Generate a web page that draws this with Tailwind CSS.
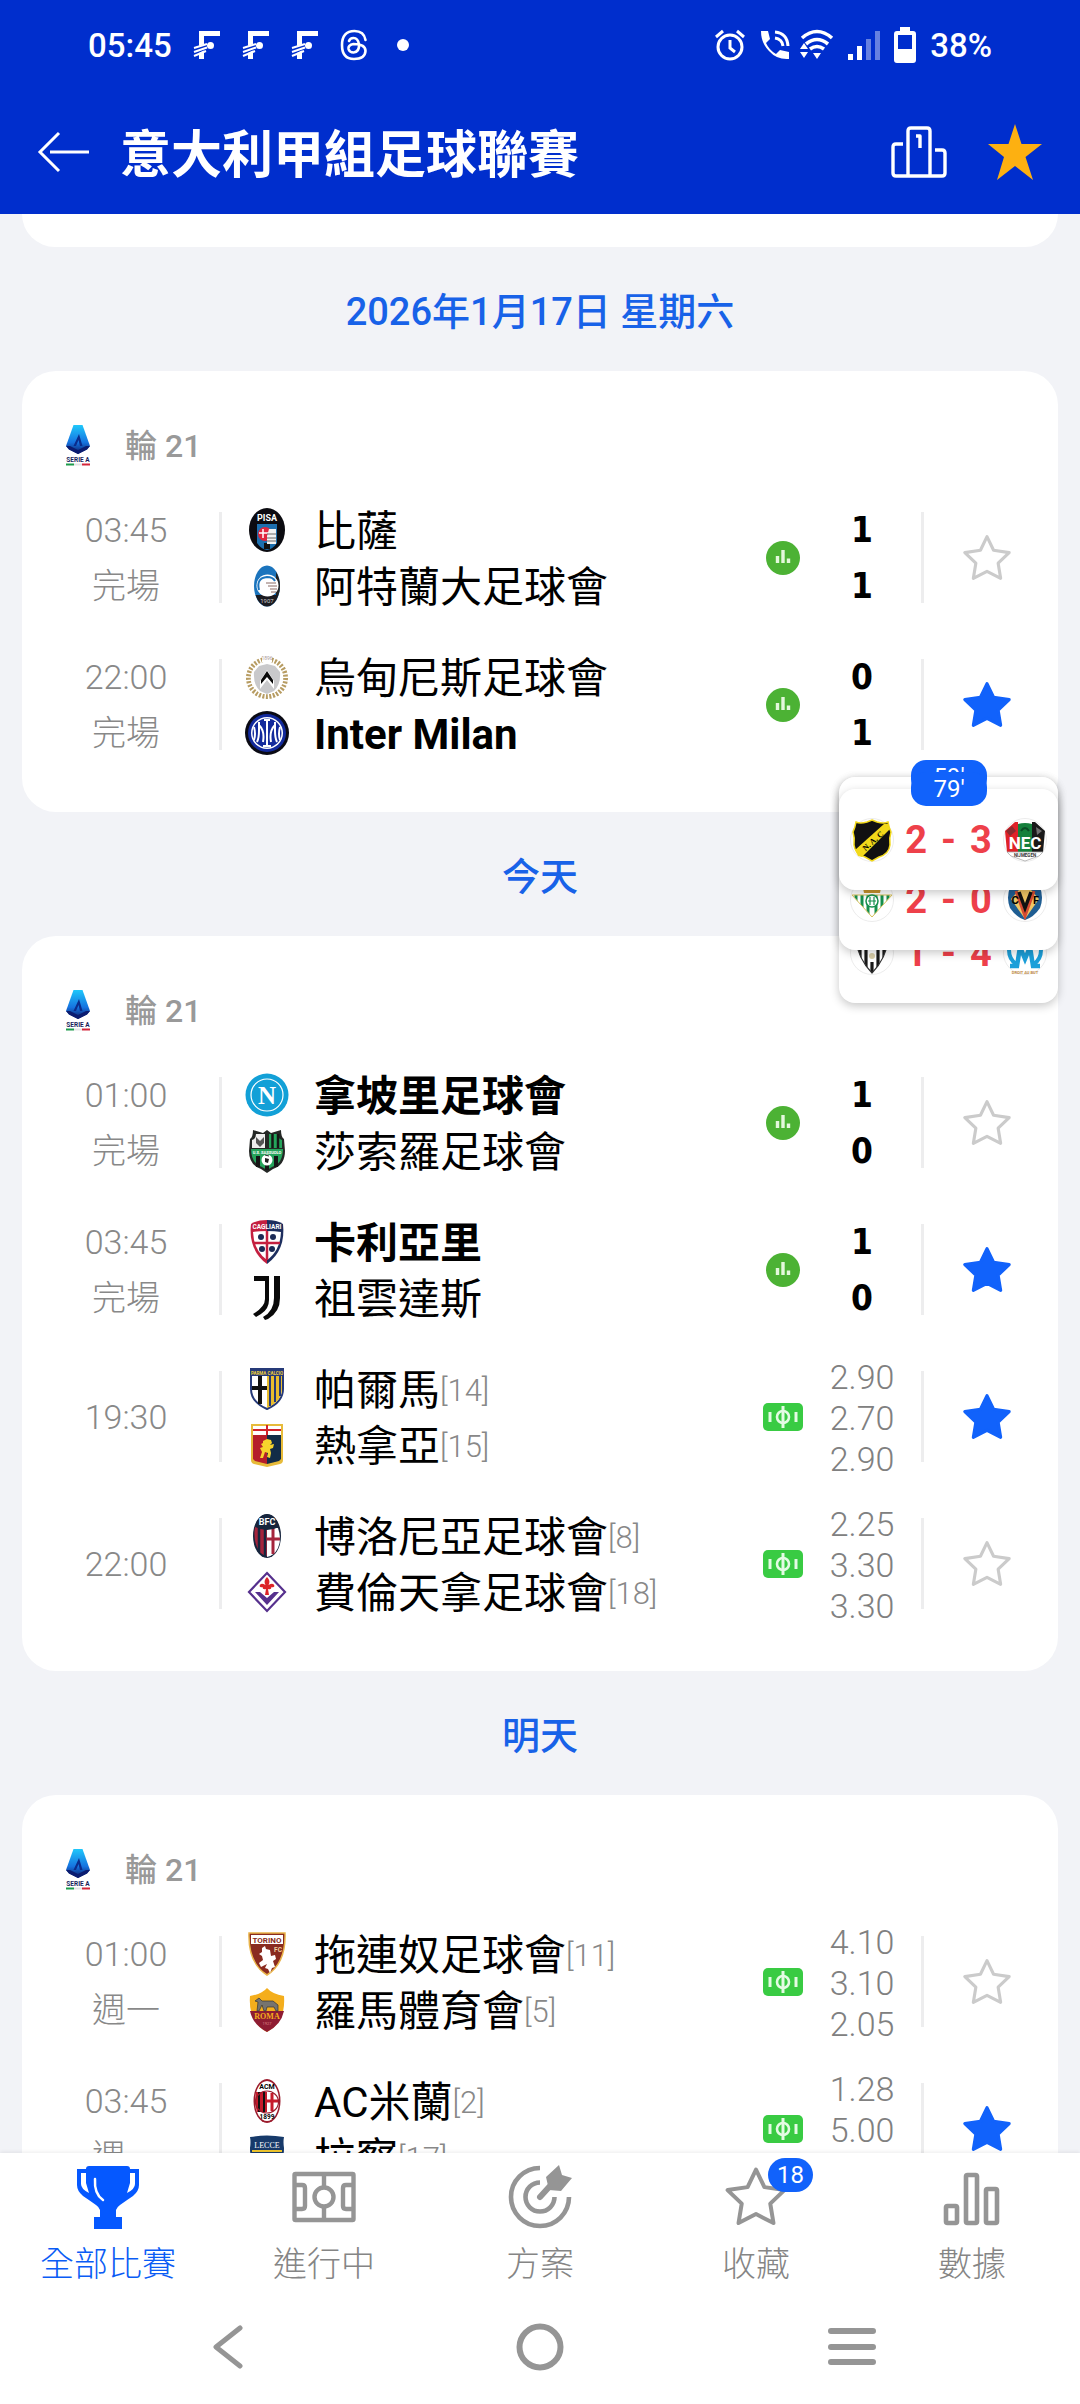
<!DOCTYPE html>
<html lang="zh-Hant">
<head>
    <meta charset="UTF-8">
    <meta name="viewport" content="width=device-width, initial-scale=1.0">
    <title>意大利甲組足球聯賽</title>
    <script src="https://cdn.jsdelivr.net/npm/@tailwindcss/browser@4"></script>
    <style>
        body {
            font-family: Roboto, 'Noto Sans CJK TC', sans-serif;
        }
    </style>
</head>
<body class="h-screen flex flex-col overflow-hidden bg-[#f2f3f7] text-black">

    <!-- Paint servers and clips: these stop working inside a display:none svg -->
    <svg class="absolute w-0 h-0" aria-hidden="true">
        <linearGradient id="gem" x1="0" y1="0" x2="0" y2="1">
            <stop offset="0" stop-color="#1fc8fb"/><stop offset=".6" stop-color="#1673e0"/><stop offset="1" stop-color="#0a1a66"/>
        </linearGradient>
        <clipPath id="betis-shield"><path d="M2 17h40L22 39z"/></clipPath>
        <clipPath id="angers-shield"><path d="M5 6h34Q36 28 22 42 8 28 5 6z"/></clipPath>
    </svg>

    <!-- Shared icons and club crests -->
    <svg class="hidden" aria-hidden="true">
        <symbol id="serie-a" viewBox="0 0 26 42">
            <path d="M8.500 0h9L25 21l-3 3.500L13 29l-9-4.500L1 21z" fill="url(#gem)"/>
            <path d="M1 21l4 0 8 4 8-4h4l-3 3.500L13 29l-9-4.500z" fill="#0b1c70"/>
            <path d="M8.500 21L14 9l3.500 12h-2.500l-1.500-6-2.500 6z" fill="#0a2c8c"/>
            <text x="13" y="36.500" text-anchor="middle" font-size="6.500" font-weight="700" fill="#1a1f5c">SERIE A</text>
            <path d="M1 39.500h8" stroke="#1d9b4b" stroke-width="2"/><path d="M9 39.500h8" stroke="#e4e4e4" stroke-width="2"/><path d="M17 39.500h8" stroke="#d3263a" stroke-width="2"/>
        </symbol>
        <symbol id="f-mark" viewBox="0 0 28 30">
            <path d="M6 1h21v5H11v23H6z" fill="#fff"/><path d="M0 18l18-6v5L0 26z" fill="#002ecd"/>
            <path d="M1 18l13-4M1 22l13-4.500M1 26l12-5" stroke="#fff" stroke-width="2"/><circle cx="17.500" cy="15.500" r="3.500" fill="#fff"/>
        </symbol>
        <symbol id="star" viewBox="0 0 48 48">
            <path d="M24 3.500l6.300 13.100 15 2.200-10.600 10.200 2.400 14.500L24 36.800l-13.100 6.700 2.400-14.500L2.700 18.800l15-2.200z" stroke-linejoin="round"/>
        </symbol>
        <symbol id="stats" viewBox="0 0 34 34">
            <circle cx="17" cy="17" r="17" fill="#4cb234"/>
            <path d="M11.500 15v7M17 9v13M22.500 17.500v4.500" stroke="#e4f8dc" stroke-width="3.400"/>
        </symbol>
        <symbol id="field" viewBox="0 0 40 28">
            <rect width="40" height="28" rx="5" fill="#39cb43"/>
            <path d="M7 9v10M33 9v10M20 3v22" stroke="#e4fbe4" stroke-width="3"/>
            <circle cx="20" cy="14" r="6" fill="none" stroke="#e4fbe4" stroke-width="2.600"/>
        </symbol>

        <symbol id="pisa" viewBox="0 0 44 44">
            <ellipse cx="22" cy="22" rx="18" ry="22" fill="#0b0b10"/>
            <path d="M12 16h20v19q-4 6-10 7-6-1-10-7z" fill="#1d6fae"/><path d="M19 35h6v6h-6z" fill="#111"/>
            <circle cx="20" cy="26" r="7" fill="#e0263d"/><path d="M18 21v9M14 25h9" stroke="#fff" stroke-width="1.500"/>
            <path d="M24 21h7v15h-9v-8z" fill="#f2f2f2"/><path d="M22 26h9M22 30h9M22 33h9" stroke="#444" stroke-width=".8"/>
            <text x="22" y="13" text-anchor="middle" font-size="9" font-weight="700" fill="#fff">PISA</text>
        </symbol>
        <symbol id="atalanta" viewBox="0 0 44 44">
            <ellipse cx="22" cy="22" rx="13" ry="20.500" fill="#1b74bd"/>
            <path d="M10.500 31h23Q30 42 22 42.500 14 42 10.500 31z" fill="#1a1a20"/><path d="M31 8q4 6 4 14 0 5-1.500 9H31z" fill="#222"/>
            <circle cx="22.500" cy="21.500" r="11" fill="#fff"/><path d="M14 26q-3-12 8-13 6 0 8 4" fill="none" stroke="#1b74bd" stroke-width="2"/>
            <path d="M21 19h10M23 22h9M25 25h7M26 28h5" stroke="#8a6a64" stroke-width="1"/>
            <text x="22" y="39" text-anchor="middle" font-size="6" fill="#ccc">1907</text>
        </symbol>
        <symbol id="udinese" viewBox="0 0 44 44">
            <circle cx="22" cy="23" r="18.500" fill="none" stroke="#b79c62" stroke-width="5" stroke-dasharray="2 1.500"/>
            <circle cx="22" cy="23" r="15.500" fill="none" stroke="#fff" stroke-width="1.500"/>
            <path d="M17 0h10v7H17z" fill="#fff"/><text x="22" y="5" text-anchor="middle" font-size="5" fill="#a99">1896</text>
            <path d="M22 9l8 2 5 6q1 12-6 19l-7 3-7-3q-7-7-6-19l5-6z" fill="#c9c9cb"/>
            <path d="M15 26l7-11 7 11v8l-7-9-7 9z" fill="#fff"/><path d="M16 25l6-9 6 9v4l-6-7-6 7z" fill="#090909"/>
        </symbol>
        <symbol id="inter" viewBox="0 0 44 44">
            <circle cx="22" cy="22" r="22" fill="#0a0a14"/><circle cx="22" cy="22" r="19" fill="#132a9c"/>
            <circle cx="22" cy="22" r="16" fill="#fff"/><circle cx="22" cy="22" r="14.500" fill="#132a9c"/>
            <path d="M19 9h6M22 9v26M18 35h8M14 11v9q0 7-2 11M30 11v9q0 7 2 11M14 14q6 6 4 17M30 14q-6 6-4 17M9 16q2 7 0 13M35 16q-2 7 0 13" stroke="#fff" stroke-width="2" fill="none"/>
        </symbol>
        <symbol id="napoli" viewBox="0 0 44 44">
            <circle cx="22" cy="22" r="21.500" fill="#12a0d7"/><circle cx="22" cy="22" r="16" fill="none" stroke="#fff" stroke-width="1.200"/>
            <text x="22" y="30.500" text-anchor="middle" font-family="Liberation Serif" font-size="25" font-weight="700" fill="#fff">N</text>
        </symbol>
        <symbol id="sassuolo" viewBox="0 0 44 44">
            <path d="M22 1l4 3 10-3q0 7 3 9l1 12q0 14-12 18l-6 4-6-4Q4 36 4 22L5 10q3-2 3-9l10 3z" fill="#242725"/>
            <path d="M11 5h9v14H7V11q4-1 4-6z" fill="#eee"/><path d="M11 8l4 4 4-4v6l-4 4-4-4z" fill="#555"/>
            <path d="M24 5h9q0 5 4 6v8H24z" fill="#25a35b"/><path d="M27.500 5v14M33 5v14" stroke="#151515" stroke-width="2.500"/>
            <path d="M6 20h32q0 14-11 18l-5 3-5-3Q6 34 6 20z" fill="#25a35b"/>
            <path d="M13 27v11M31 27v11M22 36v5" stroke="#161616" stroke-width="4"/>
            <circle cx="22" cy="31" r="5.500" fill="#fff"/><path d="M20 29l4 1-1 4-3-1z" fill="#222"/><path d="M20 26l4 1" stroke="#222"/>
            <text x="22" y="25" text-anchor="middle" font-size="4" font-weight="700" fill="#fff">U.S. SASSUOLO</text>
        </symbol>
        <symbol id="cagliari" viewBox="0 0 44 44">
            <path d="M22 0Q32 0 38 4q3 26-16 40V0z" fill="#1d2e5e"/><path d="M22 0Q12 0 6 4 3 30 22 44z" fill="#c41f3f"/>
            <path d="M22 11q8 0 14 1-1 19-14 28Q9 31 8 12q6-1 14-1z" fill="#fff"/>
            <path d="M22 11v29M9 23h26" stroke="#c41f3f" stroke-width="2.500"/>
            <g fill="#1b2a55"><circle cx="16" cy="17" r="3"/><circle cx="28" cy="17" r="3"/><circle cx="17" cy="29" r="3"/><circle cx="27" cy="29" r="3"/></g>
            <text x="22" y="9" text-anchor="middle" font-size="6.500" font-weight="700" fill="#fff">CAGLIARI</text>
        </symbol>
        <symbol id="juventus" viewBox="0 0 44 44">
            <path d="M9 0h15v24q0 9-8 14l-5 3-3-3q12-7 12-15V5H9z" fill="#090909"/>
            <path d="M29 0h6v22q0 14-12 21l-3 1-2-3q11-6 11-19z" fill="#090909"/>
        </symbol>
        <symbol id="parma" viewBox="0 0 44 44">
            <path d="M6 2h32v20q0 13-16 20Q6 35 6 22z" fill="#fff" stroke="#263a78" stroke-width="2"/>
            <path d="M22 9h15v13q0 12-15 19z" fill="#e9bd2c"/><path d="M25 9v30M30 9v26M35 9v20" stroke="#263a78" stroke-width="2"/>
            <path d="M15 9v28M7 21h15" stroke="#111" stroke-width="4"/><path d="M6 2h32v7H6z" fill="#263a78"/>
            <text x="22" y="8" text-anchor="middle" font-size="4.500" font-weight="700" fill="#edce3a">PARMA CALCIO</text>
        </symbol>
        <symbol id="genoa" viewBox="0 0 44 44">
            <path d="M6 1h32v36q0 3-3 4l-13 3-13-3q-3-1-3-4z" fill="#e7bb3a"/>
            <path d="M8 12h14v29l-12-3-2-2z" fill="#b51e2a"/><path d="M22 12h14v24l-2 2-12 3z" fill="#122c47"/>
            <path d="M8 3h28v9H8z" fill="#fff"/><path d="M8 7h28M22 2v10" stroke="#d2232b" stroke-width="2"/>
            <path d="M18 18l4-2 4 1 1 3-2 2 4-1-1 4-3 1 1 4-1 5-3-1 1-4-3-1-2 6h-3l2-6-2-4 3-1-2-3 2-1z" fill="#f6d42d"/>
        </symbol>
        <symbol id="bologna" viewBox="0 0 44 44">
            <ellipse cx="22" cy="22" rx="14" ry="22" fill="#17253d"/>
            <path d="M10 13h12v29q-6-1-9-7-5-9-3-22z" fill="#a4243c"/>
            <path d="M14 14v24M20 15v27" stroke="#17253d" stroke-width="2.500"/><path d="M22 14h11q4 11 0 20-4 8-11 9z" fill="#fff"/><path d="M28 14v26M22 25h13" stroke="#a4243c" stroke-width="3"/>
            <path d="M10 13q12 6 24 0Q32 1 22 0 12 1 10 13z" fill="#17253d"/>
            <text x="22" y="11" text-anchor="middle" font-size="9" font-weight="700" fill="#fff">BFC</text>
        </symbol>
        <symbol id="fiorentina" viewBox="0 0 44 44">
            <path d="M22 3l18 19-18 19L4 22z" fill="#fff" stroke="#56308d" stroke-width="2.200"/>
            <path d="M10 22h5l7 6 7-6h5L22 35z" fill="#56308d"/>
            <path d="M22 7q4 4 1.500 8 5-3 6 1-1 2-3 1 0 3-3.500 2l1 6h-4l1-6q-3.500 1-3.500-2-2 1-3-1 1-4 6-1Q18 11 22 7z" fill="#dc2429"/>
        </symbol>
        <symbol id="torino" viewBox="0 0 44 44">
            <path d="M4 1h36q1 30-18 42Q3 31 4 1z" fill="#8a2b20" stroke="#e9b44a" stroke-width="1.500"/>
            <path d="M6 3h32v9H6z" fill="#fff"/><text x="22" y="10.500" text-anchor="middle" font-size="8" font-weight="700" fill="#8a2b20">TORINO</text>
            <path d="M17 16l3-2 1 3 4 1 1 6 4-1 1 4-3 2 2 6-3 1-2 5-2-4-3-1 2-4-6 3-2-4 4-3-1-4-3-2 3-2z" fill="#fff"/>
            <text x="33" y="20" text-anchor="middle" font-size="6.500" font-weight="700" fill="#f0d4a0">FC</text>
        </symbol>
        <symbol id="roma" viewBox="0 0 44 44">
            <path d="M22 0q5 6 17 8 2 26-17 36Q3 34 5 8q12-2 17-8z" fill="#f4ae1c"/><path d="M5 23h34q-3 14-17 21Q8 37 5 23z" fill="#8e1c32"/>
            <path d="M10 13l4-3 3 3h11l5 4v6h-2l-2-4h-7l-1 4h-2l-2-6-3 6h-2l1-9z" fill="#77746f" stroke="#333" stroke-width=".7"/>
            <text x="22" y="31" text-anchor="middle" font-family="Liberation Serif" font-size="8" font-weight="700" fill="#f4ae1c">ROMA</text>
            <text x="22" y="37" text-anchor="middle" font-size="4" fill="#d88">1927</text>
        </symbol>
        <symbol id="milan" viewBox="0 0 44 44">
            <ellipse cx="22" cy="22" rx="13.500" ry="22" fill="#9b1b2c"/><ellipse cx="22" cy="22" rx="12" ry="20" fill="#fff"/>
            <path d="M11 13h11v20H12q-3-9-1-20z" fill="#c61b2b"/><path d="M14 13v20M19 13v20" stroke="#111" stroke-width="2"/>
            <path d="M27 14v18M22 22h12" stroke="#c61b2b" stroke-width="3"/><ellipse cx="22" cy="23" rx="11.500" ry="11" fill="none" stroke="#9b1b2c" stroke-width="1.200"/>
            <text x="22" y="10" text-anchor="middle" font-size="7" font-weight="700">ACM</text><text x="22" y="40" text-anchor="middle" font-size="6.500" font-weight="700">1899</text>
        </symbol>
        <symbol id="lecce" viewBox="0 0 44 44">
            <path d="M5 2q17-3 34 0-1 5 0 11 0 20-17 30Q5 33 5 13q1-6 0-11z" fill="#173a6a"/>
            <path d="M7 15h30v2H7z" fill="#efc62d"/><path d="M10 20h24q-2 12-12 18-10-6-12-18z" fill="#d02c37"/>
            <text x="22" y="13" text-anchor="middle" font-family="Liberation Serif" font-size="8" fill="#fff">LECCE</text>
        </symbol>
        <symbol id="nac" viewBox="0 0 44 44">
            <circle cx="22" cy="22" r="21.500" fill="#fff" stroke="#ececec"/>
            <path d="M22 2l5 2q7 2 11 0 1 6 3 10-2 6-1 13-1 9-11 12l-7 4-7-4Q5 36 4 27q1-7-1-13 2-4 3-10 4 2 11 0z" fill="#111" stroke="#f2d91a" stroke-width="1.500"/>
            <path d="M8 38l-3-6L34 6l4 0 2 5L12 39z" fill="#f2d91a"/>
            <text x="22" y="26" text-anchor="middle" font-family="Liberation Serif" font-size="8" font-weight="700" transform="rotate(-42 22 22)">N. A. C</text>
        </symbol>
        <symbol id="nec" viewBox="0 0 44 44">
            <circle cx="22" cy="22" r="21.500" fill="#fff" stroke="#ececec"/>
            <path d="M2 13L12 4h3v30H4z" fill="#e02128"/><path d="M15 6q7-2 14 0v28H15z" fill="#15803c"/><path d="M29 4h3l10 9-2 21H29z" fill="#191919"/>
            <path d="M3 13l6-5 4 5-6 5z" fill="#8b2b2f"/><path d="M33 9l6 4-5 4z" fill="#707070"/>
            <path d="M18 13q4-6 8 0" stroke="#0b4d26" stroke-width="2" fill="none"/>
            <text x="22" y="31" text-anchor="middle" font-size="17" font-weight="700" fill="#fff">NEC</text>
            <path d="M4 34h36l-4 4-14 5-14-5z" fill="#fff" stroke="#aaa" stroke-width=".8"/>
            <text x="22" y="38.500" text-anchor="middle" font-size="4.500" fill="#333">NIJMEGEN</text>
        </symbol>
        <symbol id="betis" viewBox="0 0 44 44">
            <circle cx="22" cy="22" r="21.500" fill="#fff" stroke="#ececec"/>
            <path d="M14 15l-2-10 5 3 5-5 5 5 5-3-2 10z" fill="#c9952e"/>
            <g clip-path="url(#betis-shield)"><path d="M6 17v22M12 17v22M18 17v22M26 17v22M32 17v22M38 17v22" stroke="#16904d" stroke-width="3"/></g>
            <path d="M2 17h40L22 39z" fill="none" stroke="#d7c15b"/>
            <circle cx="22" cy="23" r="6" fill="#fff" stroke="#16904d" stroke-width="1.500"/><path d="M18 23h8M20 19v8M24 19v8" stroke="#16904d" stroke-width="1.200"/>
        </symbol>
        <symbol id="villarreal" viewBox="0 0 44 44">
            <circle cx="22" cy="22" r="21.500" fill="#fff" stroke="#ececec"/>
            <path d="M22 2l15 7q4 11 0 21-6 9-15 12Q13 39 7 30 3 20 7 9z" fill="#1f5d92"/><path d="M22 5l14 16-14 20L8 21z" fill="#efc663"/>
            <path d="M13 13l9 25 9-25" stroke="#d64b32" stroke-width="3" fill="none"/><path d="M16 14l6 16 6-16" stroke="#111" stroke-width="3.500" fill="none"/>
            <text x="12" y="26" text-anchor="middle" font-size="11" font-weight="700">C</text><text x="33" y="26" text-anchor="middle" font-size="11" font-weight="700">F</text>
        </symbol>
        <symbol id="angers" viewBox="0 0 44 44">
            <circle cx="22" cy="22" r="21.500" fill="#fff" stroke="#ececec"/>
            <g clip-path="url(#angers-shield)"><path d="M10 6v36M16 6v36M28 6v36M34 6v36M22 31v12" stroke="#181818" stroke-width="3.200"/></g>
            <path d="M5 6h34Q36 28 22 42 8 28 5 6z" fill="none" stroke="#333" stroke-width="1.200"/><circle cx="22" cy="25" r="3" fill="#d8cda8"/>
        </symbol>
        <symbol id="marseille" viewBox="0 0 44 44">
            <circle cx="22" cy="22" r="21.500" fill="#fff" stroke="#ececec"/>
            <path d="M13 33q-7-5-7-14Q7 6 22 5q15 1 16 14 0 9-7 14" fill="none" stroke="#1c9fd9" stroke-width="4"/>
            <path d="M7 35h7l3-19 5 12 5-12 3 19h7" fill="none" stroke="#1c9fd9" stroke-width="4.500"/>
            <text x="22" y="43" text-anchor="middle" font-size="4" fill="#c08a44">DROIT AU BUT</text>
        </symbol>
    </svg>

    <header class="bg-[#002ecd] text-white shrink-0">
        <!-- Status bar -->
        <div class="h-[90px] px-[88px] flex items-center justify-between text-[33px] leading-none font-medium">
            <div class="flex items-center gap-[21px]">
                <span>05:45</span>
                <svg class="w-7 h-[30px]"><use href="#f-mark"/></svg>
                <svg class="w-7 h-[30px]"><use href="#f-mark"/></svg>
                <svg class="w-7 h-[30px]"><use href="#f-mark"/></svg>
                <svg class="w-7 h-8" viewBox="0 0 28 32" fill="none" stroke="#fff" stroke-width="2.600" stroke-linecap="round">
                    <path d="M25.500 11Q24 2 14.500 2 2 2 2 16t12 14q11 0 11.500-8 0-7-12-7-5.500 1-5 5 1 3.500 5 3.500 6-.5 5.500-8Q18 9 13.500 9 10 9 9 12"/>
                </svg>
                <svg class="w-7 h-3" viewBox="0 0 28 12"><circle cx="14" cy="6" r="6" fill="#fff"/></svg>
            </div>
            <div class="flex items-center gap-[14px]">
                <svg class="w-8 h-8" viewBox="0 0 32 32" fill="none" stroke="#fff" stroke-width="3">
                    <circle cx="16" cy="18" r="12"/><path d="M16 11v8l5 4M2 8l7-6M30 8l-7-6"/>
                </svg>
                <svg class="w-[30px] h-[30px]" viewBox="0 0 30 30">
                    <path d="M1 1h7l2 8-4 4q3 7 10 11l4-4 9 2v7Q17 30 9 21 1 13 1 1z" fill="#fff"/>
                    <path d="M15 2q12 1 13 14M15 8q7 1 8 8" fill="none" stroke="#fff" stroke-width="3"/>
                </svg>
                <svg class="w-[34px] h-8 -ml-1" viewBox="0 0 34 32" fill="none" stroke="#fff" stroke-width="3.600">
                    <path d="M2 9q15-13 30 0M6 15q11-9 22 0M10 20q7-5 14 0"/>
                    <path d="M0 20l4-6 4 6zM0 23h8l-4 6zM13 24h8l-4 6z" fill="#fff" stroke="none"/>
                </svg>
                <svg class="w-8 h-[30px]" viewBox="0 0 32 30" fill="#fff">
                    <path d="M0 24h5v6H0zM9 16h5v14H9z"/><path d="M18 9h5v21h-5zM27 1h5v29h-5z" opacity=".4"/>
                </svg>
                <svg class="w-[22px] h-9" viewBox="0 0 22 36">
                    <path d="M6 0h10v4h3q3 0 3 3v26q0 3-3 3H3q-3 0-3-3V7q0-3 3-3h3z" fill="#fff"/><path d="M4 8h14v14H4z" fill="#002ecd"/>
                </svg>
                <span>38%</span>
            </div>
        </div>
        <!-- Title bar -->
        <div class="h-[124px] pl-9 pr-[37px] flex items-center">
            <button aria-label="返回">
                <svg class="block w-14 h-11" viewBox="0 0 56 44" fill="none" stroke="#fff" stroke-width="3"><path d="M23 3L4 22l19 19M14 22h39"/></svg>
            </button>
            <h1 class="ml-[28px] flex-1 pt-2 text-[51px] leading-[60px] font-bold">意大利甲組足球聯賽</h1>
            <button aria-label="積分榜">
                <svg class="block w-14 h-[52px]" viewBox="0 0 56 52" fill="none" stroke="#fff" stroke-width="3.400" stroke-linejoin="round">
                    <path d="M12 18H5q-3 0-3 3v26q0 3 3 3h46q3 0 3-3V27q0-3-3-3h-7M17 50V5q0-3 3-3h16q3 0 3 3v45M25 10h4v12"/>
                </svg>
            </button>
            <button class="ml-10" aria-label="收藏聯賽">
                <svg class="block w-14 h-14" viewBox="0 0 56 56"><path d="M28 0l6.500 20H55L38.500 33 46 56 28 42 10 56l7-23L1 20h20.500z" fill="#fdb011"/></svg>
            </button>
        </div>
    </header>

    <main id="fixtures" class="flex-1 min-h-0 overflow-hidden px-[22px]">
        <div class="h-[33px] bg-white rounded-b-[34px]"></div>
    </main>

    <!-- Live scores floating above the list -->
    <aside class="absolute right-[22px] top-[760px] w-[219px] h-[243px] text-[38px] leading-[44px] font-bold text-[#ee404a]">
        <div class="absolute inset-x-0 top-[17px] bottom-0 bg-white rounded-[16px] shadow-[0_3px_10px_rgba(0,0,0,0.22)] px-[11px] pb-7 flex items-end justify-between">
            <svg class="w-11 h-11"><use href="#angers"/></svg>
            <p class="flex gap-[14px]"><span>1</span><span>-</span><span>4</span></p>
            <svg class="w-11 h-11"><use href="#marseille"/></svg>
        </div>
        <div class="absolute inset-x-0 top-[17px] bottom-[53px] bg-white rounded-[16px] shadow-[0_3px_10px_rgba(0,0,0,0.22)] px-[11px] pb-7 flex items-end justify-between">
            <span class="absolute -top-[17px] left-[72px] w-[76px] h-[34px] rounded-[15px] bg-[#1162fb] text-white text-[24px] leading-[34px] font-normal text-center">59'</span>
            <svg class="w-11 h-11"><use href="#betis"/></svg>
            <p class="flex gap-[14px]"><span>2</span><span>-</span><span>0</span></p>
            <svg class="w-11 h-11"><use href="#villarreal"/></svg>
        </div>
        <div class="absolute inset-x-0 top-[29px] bottom-[113px] bg-white rounded-[16px] shadow-[0_3px_10px_rgba(0,0,0,0.22)] px-[11px] pb-7 flex items-end justify-between">
            <span class="absolute -top-[17px] left-[72px] w-[76px] h-[34px] rounded-[15px] bg-[#1162fb] text-white text-[24px] leading-[34px] font-normal text-center">79'</span>
            <svg class="w-11 h-11"><use href="#nac"/></svg>
            <p class="flex gap-[14px]"><span>2</span><span>-</span><span>3</span></p>
            <svg class="w-11 h-11"><use href="#nec"/></svg>
        </div>
    </aside>

    <footer class="relative shrink-0 bg-white h-[251px] shadow-[0_-1px_4px_rgba(0,0,0,0.08)]">
        <nav class="grid grid-cols-5 pt-3 text-[34px] leading-10 font-light text-[#858585]">
            <a href="#all" class="flex flex-col items-center gap-[15px] text-[#0a5cf5]">
                <svg class="w-16 h-16" viewBox="0 0 64 64">
                    <path d="M10 4q0-3 3-3h38q3 0 3 3h9v16q0 6-6 11-6 4-13 9-3 2-4 5v7h6v12H18V52h6v-7q-1-3-4-5-7-5-13-9-6-5-6-11V4z" fill="#0558ff"/>
                    <path d="M5 8h5v10l3 10q-8-4-8-9zM59 8h-5v10l-3 10q8-4 8-9z" fill="#fff"/>
                    <path d="M19 14q-1 15 8 21" fill="none" stroke="#fff" stroke-width="2.500" stroke-linecap="round"/>
                </svg>
                <span>全部比賽</span>
            </a>
            <a href="#live" class="flex flex-col items-center gap-[15px]">
                <svg class="w-16 h-16" viewBox="0 0 64 64" fill="none" stroke="#959595" stroke-width="4.400">
                    <rect x="2.500" y="9" width="59" height="46" rx="1"/><path d="M32 9v12M32 43v12"/><circle cx="32" cy="32" r="9.500"/>
                    <path d="M3 20h7q3 0 3 3v18q0 3-3 3H3M61 20h-7q-3 0-3 3v18q0 3 3 3h7"/>
                </svg>
                <span>進行中</span>
            </a>
            <a href="#plans" class="flex flex-col items-center gap-[15px]">
                <svg class="w-16 h-16" viewBox="0 0 64 64" fill="none" stroke="#959595" stroke-width="4.600">
                    <path d="M32 3a29 29 0 1 0 29 29M32 17.500a14.500 14.500 0 1 0 14.500 14.500"/>
                    <path d="M32 32l10-11" stroke-width="6" stroke-linecap="round"/>
                    <path d="M38 12L51 0l3 10 10 3-11 13-12-1z" fill="#959595" stroke="none"/>
                </svg>
                <span>方案</span>
            </a>
            <a href="#favourites" class="relative flex flex-col items-center gap-[15px]">
                <svg class="w-16 h-16 fill-white stroke-[#959595] stroke-[3]"><use href="#star"/></svg>
                <span>收藏</span>
                <span class="absolute -top-[7px] left-[120px] w-[45px] h-[34px] rounded-full bg-[#1162fb] text-white text-[24px] leading-[34px] font-normal text-center">18</span>
            </a>
            <a href="#data" class="flex flex-col items-center gap-[15px]">
                <svg class="w-16 h-16" viewBox="0 0 64 64" fill="none" stroke="#959595" stroke-width="4.600">
                    <rect x="6" y="41" width="11" height="17" rx="1.500"/><rect x="26" y="10" width="11" height="48" rx="1.500"/><rect x="46" y="24" width="11" height="34" rx="1.500"/>
                </svg>
                <span>數據</span>
            </a>
        </nav>
        <!-- System buttons -->
        <div class="mt-[26px] px-[190px] flex items-center justify-between">
            <button class="w-[76px] h-[74px] flex items-center justify-center" aria-label="返回">
                <svg class="w-8 h-11" viewBox="0 0 32 44" fill="none" stroke="#959595" stroke-width="5" stroke-linecap="round" stroke-linejoin="round"><path d="M28 3L4 22l24 19"/></svg>
            </button>
            <button class="w-[76px] h-[74px] flex items-center justify-center" aria-label="主畫面">
                <svg class="w-12 h-12" viewBox="0 0 48 48" fill="none" stroke="#959595" stroke-width="6"><circle cx="24" cy="24" r="20.500"/></svg>
            </button>
            <button class="w-[76px] h-[74px] flex items-center justify-center" aria-label="最近使用">
                <svg class="w-12 h-10" viewBox="0 0 48 40" stroke="#959595" stroke-width="6" stroke-linecap="round"><path d="M3 4h42M3 20h42M3 35h42"/></svg>
            </button>
        </div>
    </footer>

    <script>
        // teams: [crest, name, rank, winner]
        const days = [
            { title: '2026年1月17日 星期六', matches: [
                { time: '03:45', note: '完場', teams: [['pisa', '比薩'], ['atalanta', '阿特蘭大足球會']], score: [1, 1] },
                { time: '22:00', note: '完場', teams: [['udinese', '烏甸尼斯足球會'], ['inter', 'Inter Milan', '', true]], score: [0, 1], fav: true }
            ] },
            { title: '今天', matches: [
                { time: '01:00', note: '完場', teams: [['napoli', '拿坡里足球會', '', true], ['sassuolo', '莎索羅足球會']], score: [1, 0] },
                { time: '03:45', note: '完場', teams: [['cagliari', '卡利亞里', '', true], ['juventus', '祖雲達斯']], score: [1, 0], fav: true },
                { time: '19:30', teams: [['parma', '帕爾馬', '[14]'], ['genoa', '熱拿亞', '[15]']], odds: ['2.90', '2.70', '2.90'], fav: true },
                { time: '22:00', teams: [['bologna', '博洛尼亞足球會', '[8]'], ['fiorentina', '費倫天拿足球會', '[18]']], odds: ['2.25', '3.30', '3.30'] }
            ] },
            { title: '明天', matches: [
                { time: '01:00', note: '週一', teams: [['torino', '拖連奴足球會', '[11]'], ['roma', '羅馬體育會', '[5]']], odds: ['4.10', '3.10', '2.05'] },
                { time: '03:45', note: '週一', teams: [['milan', 'AC米蘭', '[2]'], ['lecce', '拉察', '[17]']], odds: ['1.28', '5.00', '10.00'], fav: true }
            ] }
        ];

        function teamHtml([crest, name, rank, winner]) {
            return `
                <div class="h-14 flex items-center">
                    <svg class="w-11 h-11 shrink-0"><use href="#${crest}"/></svg>
                    <p class="ml-[25px] pt-1 flex items-center">
                        <span class="text-[42px] leading-[56px] ${winner ? 'font-bold' : 'font-normal'}">${name}</span>
                        <span class="text-[31px] leading-[56px] font-light text-[#888]">${rank || ''}</span>
                    </p>
                </div>`;
        }

        function matchHtml(m) {
            const numbers = m.score
                ? m.score.map(n => `<span class="h-14 leading-[56px] text-[35px] font-bold font-['DejaVu_Sans_Condensed','DejaVu_Sans']">${n}</span>`).join('')
                : m.odds.map(n => `<span class="leading-[41px] text-[34px] font-light text-[#808080]">${n}</span>`).join('');
            return `
                <article class="h-[147px] pl-[11px] pr-2 flex items-center">
                    <div class="w-[186px] shrink-0 text-center text-[34px] leading-[56px] font-light text-[#888]">
                        <p>${m.time}</p>${m.note ? `<p>${m.note}</p>` : ''}
                    </div>
                    <div class="w-[3px] h-[91px] bg-[#ededee]"></div>
                    <div class="ml-[23px] flex-1 min-w-0">${m.teams.map(teamHtml).join('')}</div>
                    <svg class="w-10 h-[34px]"><use href="${m.score ? '#stats' : '#field'}" ${m.score ? '' : 'y="3" height="28"'}/></svg>
                    <div class="w-[118px] ${m.score ? '' : 'pt-1'} flex flex-col items-center">${numbers}</div>
                    <div class="w-[3px] h-[91px] bg-[#ededee]"></div>
                    <button class="w-[126px] h-full flex items-center justify-center" aria-label="收藏" aria-pressed="${!!m.fav}">
                        <svg class="w-[50px] h-[50px] stroke-[3] ${m.fav ? 'fill-[#1162fb] stroke-[#1162fb]' : 'fill-white stroke-[#cbcbcb]'}"><use href="#star"/></svg>
                    </button>
                </article>`;
        }

        document.getElementById('fixtures').insertAdjacentHTML('beforeend', days.map(day => `
            <section>
                <h2 class="h-[124px] pt-[6px] flex items-center justify-center text-[38px] font-medium text-[#1862e8]">${day.title}</h2>
                <div class="bg-white rounded-[34px] pb-[34px]">
                    <div class="h-[113px] pt-[37px] pl-[43px] flex items-center gap-[34px]">
                        <svg class="w-[26px] h-[42px]"><use href="#serie-a"/></svg>
                        <h3 class="text-[32px] font-medium text-[#999]">輪 21</h3>
                    </div>
                    ${day.matches.map(matchHtml).join('')}
                </div>
            </section>`).join(''));
    </script>

</body>
</html>
